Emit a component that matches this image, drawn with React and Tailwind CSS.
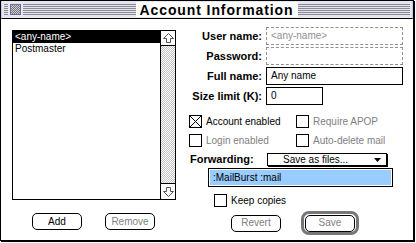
import React from 'react';

const sans = { fontFamily: '"Liberation Sans", Arial, sans-serif' };

function Check({ checked, className = '' }) {
  return (
    <div className={`w-[13px] h-[13px] border border-black bg-white shrink-0 ${className}`}>
      {checked && (
        <svg width="11" height="11" viewBox="0 0 11 11" className="block">
          <path d="M0 0L11 11M11 0L0 11" stroke="#000" strokeWidth="1" />
        </svg>
      )}
    </div>
  );
}

function CheckItem({ label, checked, disabled }) {
  return (
    <div className="w-[107px] flex items-center gap-[4px]">
      <Check checked={checked} />
      <span className={`text-[10px] leading-none ${disabled ? 'text-[#808080]' : 'text-black'}`}>{label}</span>
    </div>
  );
}

function Field({ label, value, placeholder, disabled, width = 'w-[137px]' }) {
  return (
    <div className="flex items-center h-[18px] mt-[2px] first:mt-0">
      <div className="w-[87px] text-right text-[11px] font-bold leading-none pr-[1px]">{label}</div>
      <div
        className={`ml-[3px] h-[18px] ${width} flex items-center px-[4px] text-[10px] leading-none ${
          disabled ? 'border border-dashed border-[#909090]' : 'border border-black'
        }`}
      >
        {placeholder ? <span className="text-[#909090]">{placeholder}</span> : value}
      </div>
    </div>
  );
}

function Button({ label, disabled, className = '' }) {
  return (
    <div
      className={`w-[50px] h-[17px] rounded-[5px] border border-black bg-white flex items-center justify-center text-[10px] leading-none ${
        disabled ? 'text-[#808080]' : 'text-black'
      } ${className}`}
    >
      {label}
    </div>
  );
}

function Arrow({ down }) {
  return (
    <svg width="15" height="15" viewBox="0 0 15 15" className={`block ${down ? 'rotate-180' : ''}`}>
      <polygon
        points="7.5,2.5 2.5,7.5 5.5,7.5 5.5,11.5 9.5,11.5 9.5,7.5 12.5,7.5"
        fill="#fff"
        stroke="#555"
        strokeWidth="1"
      />
    </svg>
  );
}

const stripes =
  'h-[13px] bg-[repeating-linear-gradient(to_bottom,#e4e4ee_0_1px,#8a8a96_1px_2px)]';

export default function App() {
  return (
    <div className="w-[416px] h-[243px] bg-white" style={sans}>
      <div className="w-[414px] h-[241px] border border-black shadow-[1px_1px_0_0_#000] bg-white flex flex-col">
        <div className="h-[18px] border-b border-black bg-[#e6e6ee] flex items-center px-[2px] border-x border-x-[#c8c8f0]">
          <div className={`w-[4px] ${stripes}`} />
          <div className="px-[2px] h-[13px] flex items-center bg-[#e6e6ee]">
            <div className="w-[11px] h-[11px] border border-[#6a6aa8] bg-[repeating-conic-gradient(#777_0_25%,#ccc_0_50%)] bg-[length:2px_2px]" />
          </div>
          <div className={`flex-1 ${stripes}`} />
          <div className="px-[4px] bg-white text-[14px] font-bold tracking-[0.9px] leading-none h-[15px] flex items-center">
            Account Information
          </div>
          <div className={`flex-1 ${stripes}`} />
        </div>

        <div className="flex flex-1">
          <div className="w-[175px] pl-[11px] pt-[11px] shrink-0">
            <div className="w-[164px] h-[170px] border border-black flex">
              <div className="flex-1 text-[10px] leading-none">
                <div className="h-[12px] bg-black text-white flex items-center pl-[2px]">&lt;any-name&gt;</div>
                <div className="h-[12px] flex items-center pl-[2px]">Postmaster</div>
              </div>
              <div className="w-[15px] border-l border-black flex flex-col bg-[repeating-conic-gradient(#c4c4c4_0_25%,#fff_0_50%)] bg-[length:2px_2px]">
                <div className="h-[15px] border-b border-black bg-white">
                  <Arrow />
                </div>
                <div className="flex-1" />
                <div className="h-[16px] border-t border-black bg-white">
                  <Arrow down />
                </div>
              </div>
            </div>
            <div className="flex mt-[13px]">
              <Button label="Add" className="ml-[20px]" />
              <Button label="Remove" disabled className="ml-[23px]" />
            </div>
          </div>

          <div className="flex-1 pt-[8px]">
            <Field label="User name:" placeholder="<any-name>" disabled />
            <Field label="Password:" disabled />
            <Field label="Full name:" value="Any name" />
            <Field label="Size limit (K):" value="0" width="w-[57px]" />

            <div className="flex pl-[13px] mt-[10px]">
              <CheckItem label="Account enabled" checked />
              <CheckItem label="Require APOP" disabled />
            </div>
            <div className="flex pl-[13px] mt-[6px]">
              <CheckItem label="Login enabled" disabled />
              <CheckItem label="Auto-delete mail" disabled />
            </div>

            <div className="flex items-center pl-[14px] mt-[6px]">
              <div className="w-[77px] text-[11px] font-bold leading-none">Forwarding:</div>
              <div className="w-[120px] h-[13px] border border-black shadow-[1px_1px_0_0_#000] flex items-center text-[10px] leading-none">
                <span className="flex-1 pl-[15px]">Save as files...</span>
                <svg width="7" height="4" viewBox="0 0 7 4" className="mr-[5px]">
                  <polygon points="0,0 7,0 3.5,4" fill="#000" />
                </svg>
              </div>
            </div>

            <div className="ml-[32px] mt-[2px] w-[185px] h-[19px] border border-black p-[1px]">
              <div className="h-full bg-[#99ccff] flex items-center pl-[3px] text-[10px] leading-none">:MailBurst :mail</div>
            </div>

            <div className="flex items-center gap-[4px] pl-[38px] mt-[7px]">
              <Check />
              <span className="text-[10px] leading-none">Keep copies</span>
            </div>

            <div className="flex items-center mt-[4px]">
              <Button label="Revert" disabled className="ml-[55px]" />
              <div className="ml-[20px] w-[58px] h-[24px] rounded-[8px] border-[3px] border-[#777] flex items-center justify-center">
                <Button label="Save" disabled />
              </div>
            </div>
          </div>
        </div>
      </div>
    </div>
  );
}
